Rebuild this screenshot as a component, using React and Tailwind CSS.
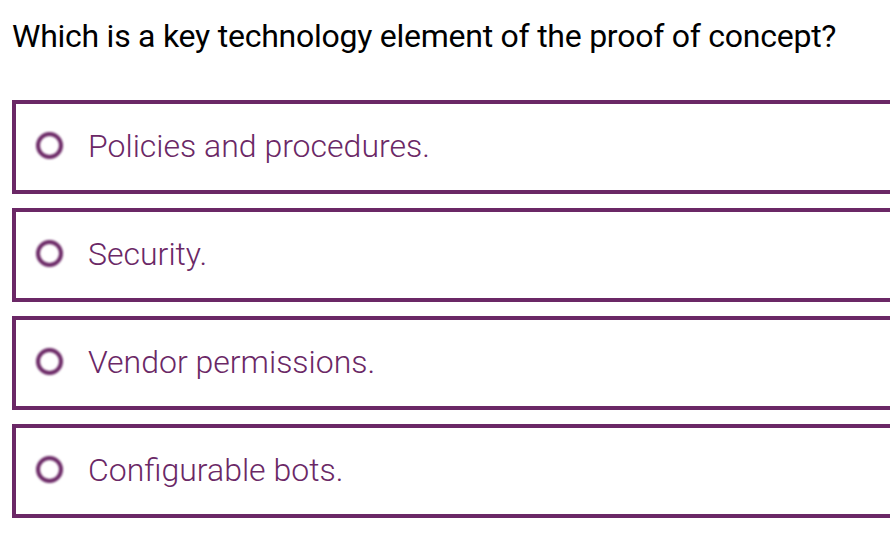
const options = [
  'Policies and procedures.',
  'Security.',
  'Vendor permissions.',
  'Configurable bots.',
];

export default function App() {
  return (
    <div className="h-[554px] w-[890px] overflow-hidden bg-white font-['Roboto',sans-serif]">
      <div className="w-[900px] pl-3">
        <h1 className="pt-[10px] text-[32px] leading-[52px] font-normal tracking-[-0.25px] text-black">
          Which is a key technology element of the proof of concept?
        </h1>
        <div className="mt-[38px] flex flex-col gap-[14px]">
          {options.map((opt) => (
            <label key={opt} className="flex h-[94px] items-center border-4 border-[#6b2866] pl-[20px]">
              <span className="mb-[4px] h-[27px] w-[27px] shrink-0 rounded-full border-[4.5px] border-[#6b2866] blur-[0.8px]" />
              <span className="mb-[2px] ml-[25px] text-[32px] leading-none font-light text-[#6b2866]">{opt}</span>
            </label>
          ))}
        </div>
      </div>
    </div>
  );
}
